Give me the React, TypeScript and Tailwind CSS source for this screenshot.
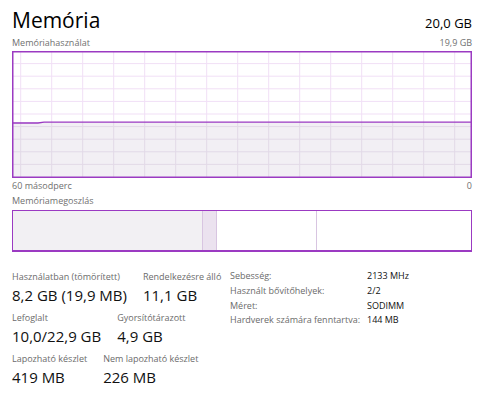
import React from "react";

const font = { fontFamily: '"Open Sans", "Noto Sans", sans-serif' };

function Graph() {
  const W = 460;
  const H = 127;
  const lineY = 71;
  const vx: number[] = [];
  for (let x = 8.7; x < W; x += 31) vx.push(x);
  const hy: number[] = [];
  for (let i = 1; i < 10; i++) hy.push(i * 12.6);
  return (
    <svg width={W} height={H} className="block">
      <rect x={0} y={0} width={W} height={H} fill="#ffffff" />
      <rect x={0} y={lineY} width={W} height={H - lineY} fill="#f2eff4" />
      {vx.map((x) => (
        <g key={x}>
          <line x1={x} y1={0} x2={x} y2={lineY} stroke="#f1dff6" strokeWidth={1} />
          <line x1={x} y1={lineY} x2={x} y2={H} stroke="#e2d9e7" strokeWidth={1} />
        </g>
      ))}
      {hy.map((y) => (
        <line
          key={y}
          x1={0}
          y1={y}
          x2={W}
          y2={y}
          stroke={y < lineY ? "#f1dff6" : "#e2d9e7"}
          strokeWidth={1}
        />
      ))}
      <path d={`M0 72 L26 72 L32 71.2 L${W} 71.2`} fill="none" stroke="#9b3ac2" strokeWidth={1.3} />
      <rect x={0.75} y={0.75} width={W - 1.5} height={H - 1.5} fill="none" stroke="#9b3ac2" strokeWidth={1.5} />
    </svg>
  );
}

function Stat({ label, value }: { label: string; value: string }) {
  return (
    <div className="flex flex-col whitespace-nowrap">
      <div className="text-[9px] leading-[13px] text-[#6b6b6b]">{label}</div>
      <div className="text-[15px] leading-[20px] text-[#111] mt-[1.5px]">{value}</div>
    </div>
  );
}

export default function App() {
  return (
    <div className="w-[480px] h-[399px] bg-white pl-[12px] pr-[8px] overflow-hidden" style={font}>
      <div className="flex items-baseline justify-between pt-[6px]">
        <div className="text-[21px] leading-[28px] text-black">Memória</div>
        <div className="text-[13px] leading-[18px] text-black">20,0 GB</div>
      </div>
      <div className="flex justify-between text-[9px] leading-[13px] text-[#707070] mt-[2px]">
        <span>Memóriahasználat</span>
        <span>19,9 GB</span>
      </div>
      <div className="mt-[2px]">
        <Graph />
      </div>
      <div className="flex justify-between text-[9px] leading-[13px] text-[#707070] mt-[1px]">
        <span>60 másodperc</span>
        <span>0</span>
      </div>
      <div className="text-[9px] leading-[13px] text-[#707070] mt-[2px]">Memóriamegoszlás</div>
      <div className="mt-[3px] h-[42px] w-[460px] flex border-[1.5px] border-[#9b3ac2] border-b-2">
        <div className="w-[189px] bg-[#f2f0f3]" />
        <div className="w-[15px] bg-[#ebe2ef] border-l border-r border-[#d8c5e1]" />
        <div className="w-[100px] bg-white border-r border-[#d8c5e1]" />
        <div className="flex-1 bg-white" />
      </div>
      <div className="flex items-start mt-[18px]">
        <div className="flex flex-col gap-[6.5px] w-[218px] shrink-0">
          <div className="flex gap-[16px]">
            <Stat label="Használatban (tömörített)" value="8,2 GB (19,9 MB)" />
            <Stat label="Rendelkezésre álló" value="11,1 GB" />
          </div>
          <div className="flex gap-[16px]">
            <Stat label="Lefoglalt" value="10,0/22,9 GB" />
            <Stat label="Gyorsítótárazott" value="4,9 GB" />
          </div>
          <div className="flex gap-[16px]">
            <Stat label="Lapozható készlet" value="419 MB" />
            <Stat label="Nem lapozható készlet" value="226 MB" />
          </div>
        </div>
        <div className="grid grid-cols-[137px_auto] content-start text-[9px] leading-[14.8px] -mt-[1px] whitespace-nowrap">
          <div className="text-[#6b6b6b]">Sebesség:</div>
          <div className="text-[#111]">2133 MHz</div>
          <div className="text-[#6b6b6b]">Használt bővítőhelyek:</div>
          <div className="text-[#111]">2/2</div>
          <div className="text-[#6b6b6b]">Méret:</div>
          <div className="text-[#111]">SODIMM</div>
          <div className="text-[#6b6b6b]">Hardverek számára fenntartva:</div>
          <div className="text-[#111]">144 MB</div>
        </div>
      </div>
    </div>
  );
}
